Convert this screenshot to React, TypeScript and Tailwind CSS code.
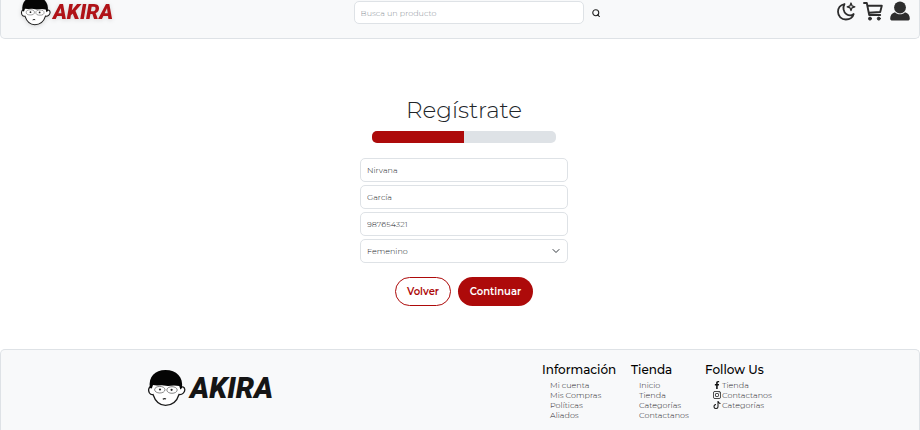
import React from "react";
import { BsInstagram, BsTiktok } from "react-icons/bs";
import { FaFacebookF } from "react-icons/fa";
import { ChevronDown } from "lucide-react";

function Face({ className }: { className: string }) {
  return (
    <svg viewBox="0 0 38 37" className={className} aria-hidden="true">
      <path
        d="M3 17 C.5 17.500 0 21 1.500 23.500 C2.500 25 4 25.300 5 25 C7 31 11 35.800 17.500 35.800 C24.500 35.800 29 31.500 31 25 C34.500 25.500 37 22.500 36.800 20 C36.500 17.500 34.500 16.800 33 18 L30 10 L6 10 Z"
        fill="#fff"
        stroke="#1c1c1c"
        strokeWidth="1.300"
      />
      <path
        d="M1.800 18.500 C.3 7 7 .5 17.500 .5 C28.500 .5 35.500 7.500 34 18.500 L32.300 20 L31.300 16.500 L26 16 L20 16.600 L14 15.800 L9 16 L5 15.600 L3.800 19 Z"
        fill="#050505"
      />
      <g fill="#fff" stroke="#555" strokeWidth=".7">
        <ellipse cx="11.800" cy="20.200" rx="5.200" ry="3.300" />
        <ellipse cx="24" cy="20.500" rx="5.200" ry="3.300" />
      </g>
      <circle cx="12" cy="20" r="1.100" fill="#222" />
      <circle cx="23.600" cy="20.300" r="1.100" fill="#222" />
      <path d="M14.800 29.800 Q16.500 28.700 18 29.600" fill="none" stroke="#222" strokeWidth="1.200" />
    </svg>
  );
}

function SearchIcon() {
  return (
    <svg viewBox="0 0 16 16" className="size-2" fill="none" stroke="#222" strokeWidth="2.200" aria-hidden="true">
      <circle cx="7.500" cy="7.500" r="6" />
      <path d="M11.500 11.500 L15 15.500" strokeLinecap="round" />
    </svg>
  );
}

function MoonIcon() {
  return (
    <svg viewBox="0 0 20 20" className="size-5" fill="none" stroke="currentColor" strokeLinejoin="round" aria-hidden="true">
      <path d="M8.500 3 C4.500 4 2 7.200 2 10.800 C2 15.300 5.500 18.500 9.800 18.500 C13.500 18.500 16.800 16.300 17.700 13 C15.800 14.500 12.800 14.700 10.500 13.200 C7.300 11.200 6.600 6.500 8.500 3 Z" strokeWidth="1.800" />
      <path d="M15 2 L16 4.800 L18.800 5.800 L16 6.800 L15 9.600 L14 6.800 L11.200 5.800 L14 4.800 Z" strokeWidth="1.300" />
    </svg>
  );
}

function CartIcon() {
  return (
    <svg viewBox="0 0 20 20" className="size-5" fill="none" stroke="currentColor" strokeLinecap="round" strokeLinejoin="round" aria-hidden="true">
      <path d="M1 2 H3.800 L6.200 14 H17.200 M4.500 4.800 H18.800 L17.200 11 L6 11.800" strokeWidth="1.900" />
      <circle cx="7" cy="17.600" r="1.500" fill="currentColor" strokeWidth="1" />
      <circle cx="15.800" cy="17.600" r="1.500" fill="currentColor" strokeWidth="1" />
    </svg>
  );
}

function PersonIcon() {
  return (
    <svg viewBox="0 0 20 20" className="size-5" fill="currentColor" aria-hidden="true">
      <circle cx="10" cy="6.500" r="5.900" />
      <path d="M5 11.300 C7.500 14 12.500 14 15 11.300 C18.300 12.300 19.800 14.500 19.800 17.600 C19.800 19 19 19.600 17.600 19.600 H2.400 C1 19.600 .2 19 .2 17.600 C.2 14.500 1.700 12.300 5 11.300 Z" />
    </svg>
  );
}

const fieldClass =
  "h-6 w-full rounded-[5px] border border-[#dee2e6] bg-white px-1.5 text-[8px] font-light text-[#212529] outline-none";

function FooterColumn({ title, children }: { title: string; children: React.ReactNode }) {
  return (
    <section>
      <h2 className="text-[12px] leading-4 font-medium whitespace-nowrap text-black">{title}</h2>
      <ul className="mt-0.5 pl-2 text-[8px] leading-[10px] font-light text-[#1f2429]">{children}</ul>
    </section>
  );
}

function FooterLink({ icon, children }: { icon?: React.ReactNode; children: string }) {
  return (
    <li>
      <a href="#" className="flex items-center gap-px whitespace-nowrap">
        {icon && <span className="flex w-2 justify-center text-[#111]">{icon}</span>}
        {children}
      </a>
    </li>
  );
}

export default function App() {
  return (
    <div className="flex min-h-screen flex-col bg-white font-['Montserrat','Inter',sans-serif]">
      <header className="flex items-start justify-between rounded-b-[5px] border border-t-0 border-[#dee2e6] bg-[#f8f9fa] pr-[9px] pb-3 pl-5">
        <a href="#" aria-label="Akira" className="flex items-start gap-0.5 drop-shadow-sm">
          <Face className="-mt-1 size-[30px]" />
          <span className="font-['Roboto',sans-serif] text-[21px] leading-6 font-black text-[#b01217] italic">
            AKIRA
          </span>
        </a>
        <form className="flex items-center gap-2 pt-px pl-1">
          <input
            type="search"
            aria-label="Busca un producto"
            placeholder="Busca un producto"
            className="h-[23px] w-[230px] rounded-[5px] border border-[#dee2e6] bg-white px-1.5 text-[8px] font-light outline-none placeholder:text-[#8b9299]"
          />
          <button type="button" aria-label="Buscar">
            <SearchIcon />
          </button>
        </form>
        <nav aria-label="Cuenta" className="flex items-center gap-[7px] pt-px text-[#2d2d2d]">
          <button type="button" aria-label="Modo oscuro">
            <MoonIcon />
          </button>
          <a href="#" aria-label="Carrito">
            <CartIcon />
          </a>
          <a href="#" aria-label="Mi cuenta">
            <PersonIcon />
          </a>
        </nav>
      </header>

      <main className="flex flex-col items-center pt-[55px] pb-[43px] pl-2">
        <h1 className="text-[23px] leading-8 font-light text-[#212529]">Regístrate</h1>
        <div
          role="progressbar"
          aria-label="Progreso del registro"
          aria-valuenow={50}
          className="mt-[5px] h-3 w-[184px] overflow-hidden rounded-[5px] bg-[#dee2e6]"
        >
          <div className="h-full w-1/2 bg-[#ad0a0a]" />
        </div>
        <form className="mt-[15px] flex w-52 flex-col gap-[3px]">
          <input aria-label="Nombre" defaultValue="Nirvana" className={fieldClass} />
          <input aria-label="Apellido" defaultValue="García" className={fieldClass} />
          <input aria-label="Teléfono" defaultValue="987654321" className={fieldClass} />
          <div className="relative">
            <select aria-label="Género" className={`${fieldClass} block appearance-none`}>
              <option>Femenino</option>
              <option>Masculino</option>
            </select>
            <ChevronDown className="pointer-events-none absolute top-1.5 right-1.5 size-3 text-[#343a40]" />
          </div>
          <div className="mt-[11px] flex justify-center gap-[7px] text-[10px] font-semibold">
            <button type="button" className="h-[29px] w-14 rounded-full border border-[#ad0a0a] bg-white text-[#ad0a0a]">
              Volver
            </button>
            <button type="submit" className="h-[29px] w-[75px] rounded-full bg-[#ad0a0a] text-white">
              Continuar
            </button>
          </div>
        </form>
      </main>

      <footer className="flex grow items-start justify-between rounded-t-[5px] border border-b-0 border-[#dee2e6] bg-[#f8f9fa] pt-3 pr-[148px] pb-1 pl-[147px]">
        <a href="#" aria-label="Akira" className="mt-[7px] flex items-center gap-1">
          <Face className="size-[38px]" />
          <span className="font-['Roboto',sans-serif] text-[29px] leading-9 font-black text-[#151515] italic">
            AKIRA
          </span>
        </a>
        <nav aria-label="Pie de página" className="grid grid-cols-[73px_58px_66px] gap-4">
          <FooterColumn title="Información">
            <FooterLink>Mi cuenta</FooterLink>
            <FooterLink>Mis Compras</FooterLink>
            <FooterLink>Políticas</FooterLink>
            <FooterLink>Aliados</FooterLink>
          </FooterColumn>
          <FooterColumn title="Tienda">
            <FooterLink>Inicio</FooterLink>
            <FooterLink>Tienda</FooterLink>
            <FooterLink>Categorías</FooterLink>
            <FooterLink>Contactanos</FooterLink>
          </FooterColumn>
          <FooterColumn title="Follow Us">
            <FooterLink icon={<FaFacebookF className="size-2" />}>Tienda</FooterLink>
            <FooterLink icon={<BsInstagram className="size-2" />}>Contactanos</FooterLink>
            <FooterLink icon={<BsTiktok className="size-2" />}>Categorías</FooterLink>
          </FooterColumn>
        </nav>
      </footer>
    </div>
  );
}
